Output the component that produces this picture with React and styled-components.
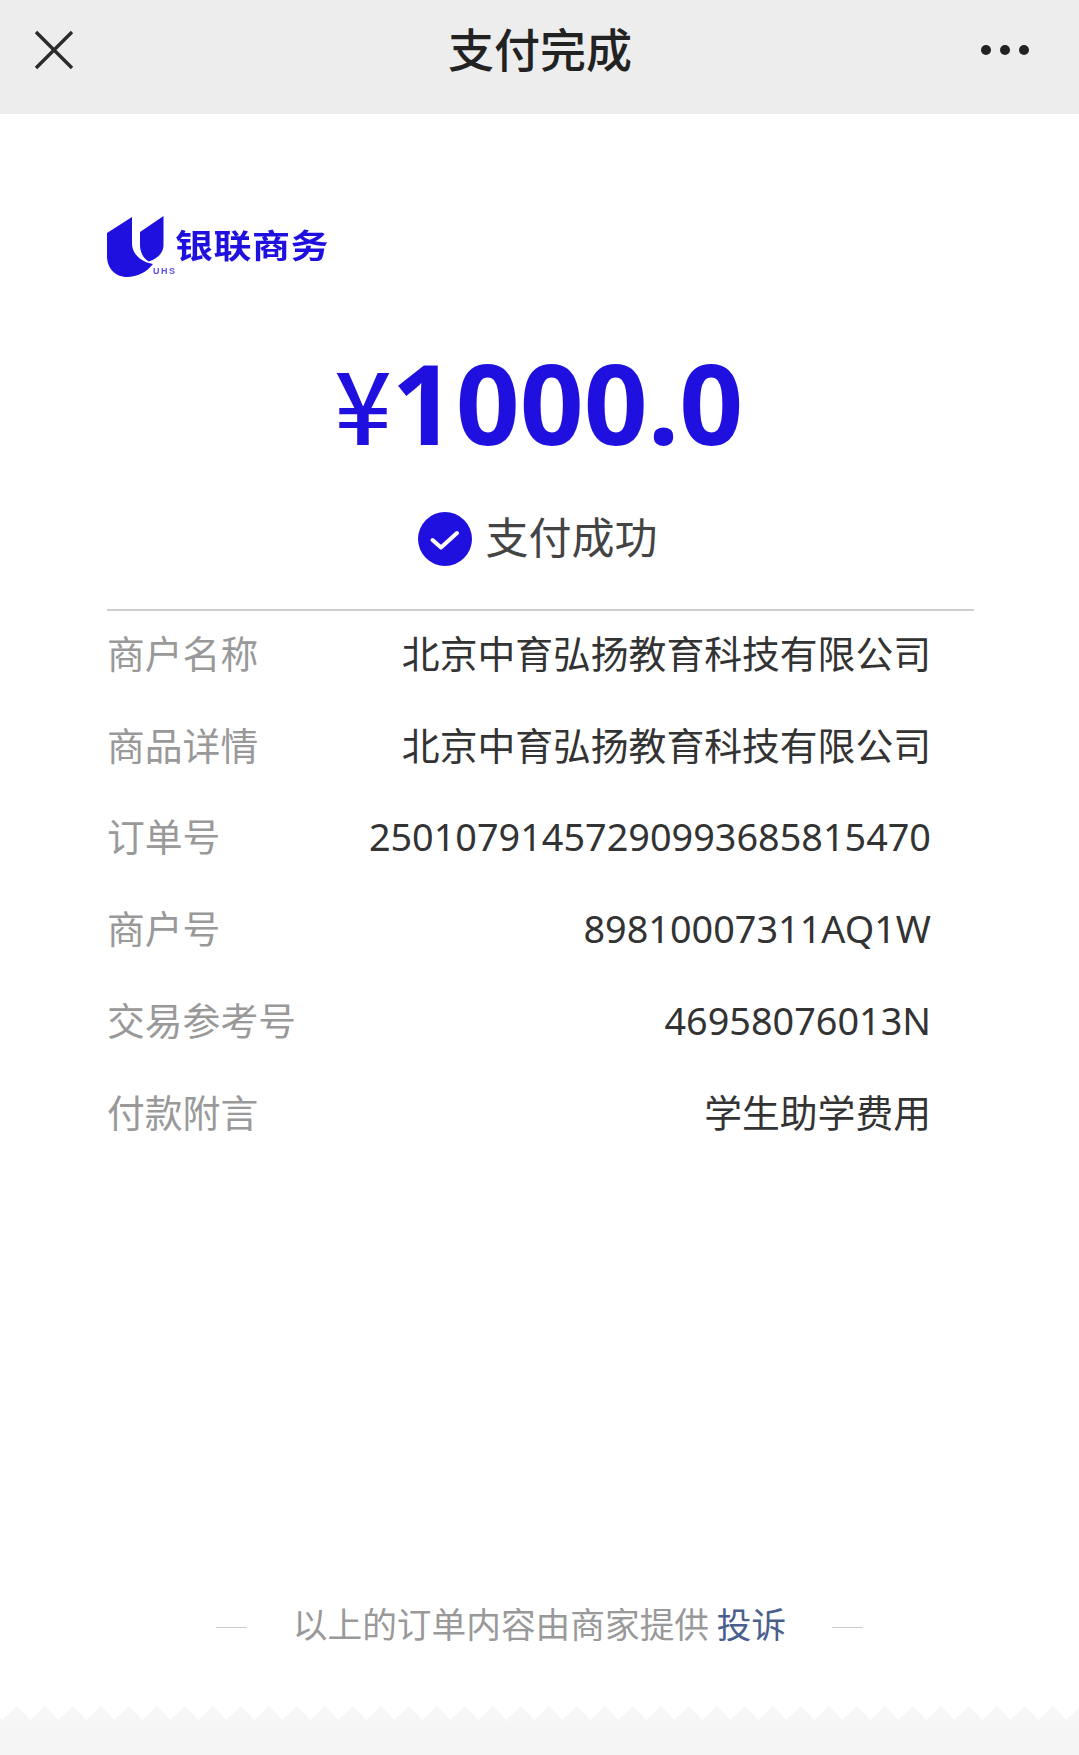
import React from 'react'
import styled, { createGlobalStyle } from 'styled-components'

const GlobalStyle = createGlobalStyle`
    html, body {
        margin: 0;
        padding: 0;
        background: #ffffff;
    }
    body {
        font-family: "Noto Sans", "Noto Sans CJK SC", sans-serif;
    }
`

const rows = [
    { label: '商户名称', value: '北京中育弘扬教育科技有限公司' },
    { label: '商品详情', value: '北京中育弘扬教育科技有限公司' },
    { label: '订单号', value: '25010791457290993685815470' },
    { label: '商户号', value: '89810007311AQ1W' },
    { label: '交易参考号', value: '46958076013N' },
    { label: '付款附言', value: '学生助学费用' },
]

const App = () => {
    return (
        <Page>
            <GlobalStyle />
            <TopBar>
                <CloseButton aria-label="close">
                    <svg width="40" height="40" viewBox="0 0 40 40">
                        <path d="M2 2 L38 38 M38 2 L2 38" stroke="#2b2b2b" strokeWidth="3.4" fill="none" />
                    </svg>
                </CloseButton>
                <Title>支付完成</Title>
                <MoreButton aria-label="more">
                    <svg width="50" height="12" viewBox="0 0 50 12">
                        <circle cx="6" cy="6" r="5" fill="#222" />
                        <circle cx="25" cy="6" r="5" fill="#222" />
                        <circle cx="44" cy="6" r="5" fill="#222" />
                    </svg>
                </MoreButton>
            </TopBar>

            <Content>
                <Logo>
                    <svg width="58" height="62" viewBox="0 0 58 62">
                        <path d="M0 17 L25 1 L25 27 C25 38 34 46 46 48 C40 56 30 61 20 61 C8 61 0 52 0 40 Z" fill="#1f10e0" />
                        <path d="M33 16 L56.5 0 L56.5 29 C56.5 37 50 43 41.5 45.5 C36 42 33 36 33 29 Z" fill="#1f10e0" />
                    </svg>
                    <LogoText>银联商务</LogoText>
                    <LogoSmall>UHS</LogoSmall>
                </Logo>

                <Amount><Yen>¥</Yen>1000.0</Amount>

                <Status>
                    <svg width="54" height="54" viewBox="0 0 54 54">
                        <circle cx="27" cy="27" r="27" fill="#1f10e0" />
                        <path d="M14.5 28 L23 35.5 L39 21" stroke="#fff" strokeWidth="4" fill="none" strokeLinecap="round" strokeLinejoin="round" />
                    </svg>
                    <StatusText>支付成功</StatusText>
                </Status>

                <Details>
                    {rows.map((row) => (
                        <Row key={row.label}>
                            <Label>{row.label}</Label>
                            <Value>{row.value}</Value>
                        </Row>
                    ))}
                </Details>
            </Content>

            <Notice>
                <Dash />
                <NoticeText>以上的订单内容由商家提供 <Complain>投诉</Complain></NoticeText>
                <Dash />
            </Notice>

            <Zigzag />
            <Bottom />
        </Page>
    )
}

export default App

const Page = styled.div`
    width: 1079px;
    height: 1755px;
    display: flex;
    flex-direction: column;
    overflow: hidden;
    background: #ffffff;
`

const TopBar = styled.header`
    height: 114px;
    flex: none;
    box-sizing: border-box;
    padding: 0 49px 14px 34px;
    display: grid;
    grid-template-columns: 1fr auto 1fr;
    align-items: center;
    background: #ededed;
`

const CloseButton = styled.div`
    display: flex;
    justify-content: flex-start;
`

const MoreButton = styled.div`
    display: flex;
    justify-content: flex-end;
`

const Title = styled.h1`
    margin: -6px 0 0 16px;
    font-family: "Noto Sans CJK SC", sans-serif;
    font-size: 46px;
    line-height: 60px;
    font-weight: 500;
    color: #222;
`

const Content = styled.main`
    flex: 1;
    box-sizing: border-box;
    padding: 102px 105px 0 107px;
    display: flex;
    flex-direction: column;
`

const Logo = styled.div`
    position: relative;
    height: 62px;
    display: flex;
    align-items: flex-start;
    gap: 10px;
    filter: blur(0.5px);
`

const LogoText = styled.span`
    margin-top: 9px;
    font-family: "Noto Sans CJK SC", sans-serif;
    font-size: 38px;
    line-height: 38px;
    letter-spacing: 0.5px;
    font-weight: 700;
    color: #1f10e0;
    transform: scaleY(0.88);
`

const LogoSmall = styled.span`
    position: absolute;
    left: 46px;
    top: 50px;
    font-family: "Liberation Sans", sans-serif;
    font-size: 9px;
    letter-spacing: 1.5px;
    font-weight: 700;
    color: #5a50e8;
`

const Amount = styled.div`
    margin: 57px 3px 0 0;
    text-align: center;
    font-family: "Noto Sans", sans-serif;
    font-size: 112px;
    line-height: 134px;
    font-weight: 700;
    color: #1f10e0;
`

const Yen = styled.span`
    font-family: "Noto Sans CJK SC", sans-serif;
    font-weight: 500;
    font-size: 100px;
`

const Status = styled.div`
    margin: 43px 6px 0 0;
    display: flex;
    align-items: center;
    justify-content: center;
    gap: 14px;
`

const StatusText = styled.span`
    margin-bottom: 7px;
    font-family: "Noto Sans CJK SC", sans-serif;
    font-size: 43px;
    line-height: 47px;
    color: #444;
`

const Details = styled.section`
    margin-top: 43px;
    border-top: 2px solid #cfcfcf;
    padding: 0 43px 0 0;
    display: flex;
    flex-direction: column;
`

const Row = styled.div`
    height: 91.8px;
    display: flex;
    align-items: center;
    justify-content: space-between;
    font-size: 37.8px;
    line-height: 50px;
    &:first-child { margin-top: -6px; }
`

const Label = styled.span`
    padding-top: 2px;
    font-family: "Noto Sans CJK SC", sans-serif;
    color: #999;
`

const Value = styled.span`
    padding-top: 6px;
    font-family: "Noto Sans", "Noto Sans CJK SC", sans-serif;
    color: #333;
`

const Notice = styled.footer`
    flex: none;
    height: 40px;
    margin-bottom: 63px;
    display: flex;
    align-items: center;
    justify-content: center;
    gap: 46px;
`

const Dash = styled.i`
    width: 31px;
    height: 1px;
    margin-top: 9px;
    background: #cccccc;
`

const NoticeText = styled.span`
    font-family: "Noto Sans CJK SC", sans-serif;
    font-size: 34.7px;
    color: #999;
    white-space: nowrap;
`

const Complain = styled.span`
    color: #4b5f8f;
`

const Zigzag = styled.div`
    flex: none;
    height: 14px;
    background:
        linear-gradient(135deg, transparent 50%, #f7f7f7 50%) -12px 0 / 28px 28px repeat-x,
        linear-gradient(225deg, transparent 50%, #f7f7f7 50%) -12px 0 / 28px 28px repeat-x;
`

const Bottom = styled.div`
    flex: none;
    height: 35px;
    background: linear-gradient(#f7f7f7, #f5f5f5 12px);
`
